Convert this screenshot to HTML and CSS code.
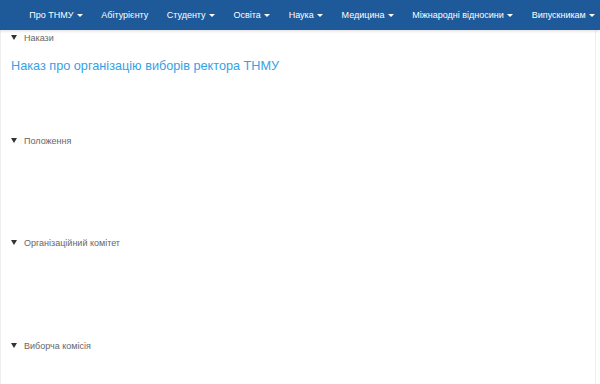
FILE: index.html
```html
<!DOCTYPE html>
<html lang="uk">
  <head>
    <meta charset="UTF-8" />
    <meta name="viewport" content="width=device-width, initial-scale=1.0" />
    <title>Вибори ректора ТНМУ</title>
    <link rel="stylesheet" href="styles.css">
  </head>
  <body>
    <nav class="navbar">
      <ul class="nav">
        <li><a href="#">Про ТНМУ <span class="caret"></span></a></li>
        <li><a href="#">Абітурієнту</a></li>
        <li><a href="#">Студенту <span class="caret"></span></a></li>
        <li><a href="#">Освіта <span class="caret"></span></a></li>
        <li><a href="#">Наука <span class="caret"></span></a></li>
        <li><a href="#">Медицина <span class="caret"></span></a></li>
        <li><a href="#">Міжнародні відносини <span class="caret"></span></a></li>
        <li><a href="#">Випускникам <span class="caret"></span></a></li>
      </ul>
    </nav>

    <div class="content">
      <details class="section" open>
        <summary>Накази</summary>
        <a class="doc-link" href="#">Наказ про організацію виборів ректора ТНМУ</a>
      </details>

      <details class="section" open>
        <summary>Положення</summary>
      </details>

      <details class="section" open>
        <summary>Організаційний комітет</summary>
      </details>

      <details class="section" open>
        <summary>Виборча комісія</summary>
      </details>
    </div>
  </body>
</html>
```

FILE: styles.css
```css
body {
  margin: 0;
  font-family: "Liberation Sans", Arial, sans-serif;
  background-color: #fff;
  overflow: hidden;
}
.navbar {
  position: relative;
  z-index: 2;
  height: 30px;
  overflow: hidden;
  background-color: #1e5a99;
  box-shadow: 0 1px 3px rgba(0, 0, 0, 0.15);
}
.nav {
  display: flex;
  margin: 0;
  padding: 0 0 0 20px;
  list-style: none;
  white-space: nowrap;
}
.nav a {
  display: block;
  padding: 0 9.2px;
  line-height: 30px;
  font-size: 9px;
  color: #fff;
  text-decoration: none;
}
.caret {
  display: inline-block;
  width: 0;
  height: 0;
  margin-left: 1px;
  vertical-align: middle;
  border-top: 3px solid #fff;
  border-left: 3px solid transparent;
  border-right: 3px solid transparent;
}
.content {
  width: 596px;
  height: 354px;
  overflow: hidden;
  border-left: 1px solid #eee;
  border-right: 1px solid #eee;
  padding-top: 2px;
  box-sizing: border-box;
}
.section {
  height: 102.7px;
  padding-left: 10px;
}
.section summary {
  display: block;
  font-size: 9px;
  line-height: 13px;
  color: #666;
  cursor: pointer;
}
.section summary::-webkit-details-marker {
  display: none;
}
.section summary::before {
  content: "";
  display: inline-block;
  width: 0;
  height: 0;
  margin-right: 7px;
  vertical-align: 1px;
  border-top: 5px solid #333;
  border-left: 3px solid transparent;
  border-right: 3px solid transparent;
}
.doc-link {
  display: block;
  margin-top: 14px;
  font-size: 12.7px;
  color: #35a2e4;
  text-decoration: none;
}
```
